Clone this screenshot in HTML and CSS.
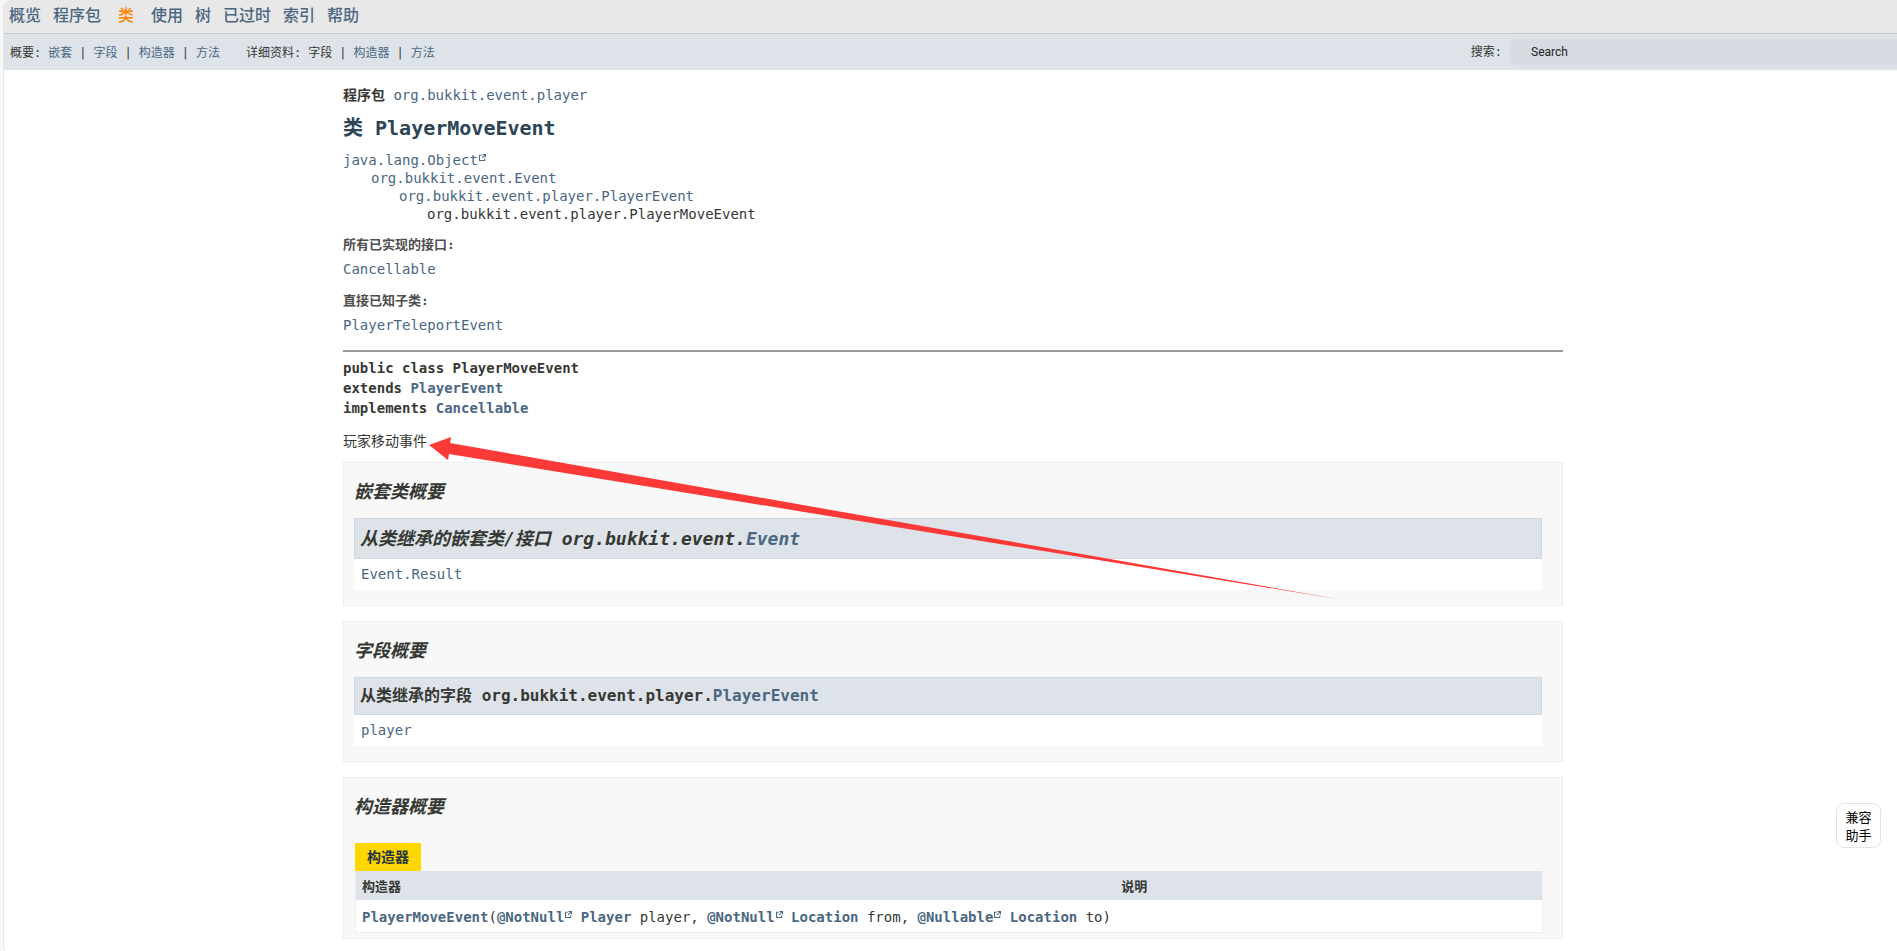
FILE: index.html
```html
<!DOCTYPE html>
<html lang="zh-CN">
<head>
<meta charset="utf-8">
<title>PlayerMoveEvent</title>
<link rel="stylesheet" href="styles.css">
</head>
<body>
<svg class="defs" aria-hidden="true">
  <symbol id="external" viewBox="0 0 8 8">
    <path d="M3 1.500H.6V7.400H6.500V5M4 .6H7.400V4M7.400 .6L3.500 4.500" fill="none" stroke="currentColor" stroke-width="1.200"/>
  </symbol>
</svg>
<div class="page">
  <header>
    <nav class="top-nav">
      <a href="#">概览</a>
      <a href="#">程序包</a>
      <span class="current">类</span>
      <a href="#">使用</a>
      <a href="#">树</a>
      <a href="#">已过时</a>
      <a href="#">索引</a>
      <a href="#">帮助</a>
    </nav>
    <div class="sub-nav">
      <div class="sub-list"><span>概要:</span><a href="#">嵌套</a><i>|</i><a href="#">字段</a><i>|</i><a href="#">构造器</a><i>|</i><a href="#">方法</a></div>
      <div class="sub-list"><span>详细资料:</span><span>字段</span><i>|</i><a href="#">构造器</a><i>|</i><a href="#">方法</a></div>
      <div class="search">
        <label for="search-input">搜索:</label>
        <input id="search-input" type="text" placeholder="Search">
      </div>
    </div>
  </header>

  <main>
    <div class="package"><b>程序包</b> <a href="#">org.bukkit.event.player</a></div>
    <h1>类 PlayerMoveEvent</h1>
    <div class="inheritance"><a href="#">java.lang.Object<svg class="ext"><use href="#external"/></svg></a>
      <div><a href="#">org.bukkit.event.Event</a>
        <div><a href="#">org.bukkit.event.player.PlayerEvent</a>
          <div>org.bukkit.event.player.PlayerMoveEvent</div>
        </div>
      </div>
    </div>
    <dl class="notes">
      <dt>所有已实现的接口:</dt>
      <dd><a href="#">Cancellable</a></dd>
      <dt>直接已知子类:</dt>
      <dd><a href="#">PlayerTeleportEvent</a></dd>
    </dl>
    <hr>
    <div class="signature">public class PlayerMoveEvent<br>extends <a href="#">PlayerEvent</a><br>implements <a href="#">Cancellable</a></div>
    <div class="description">玩家移动事件
      <svg class="arrow" viewBox="0 0 914 163" aria-hidden="true"><path d="M0 8L22 0L21 6L914 163L20 17L19 23Z"/></svg>
    </div>

    <section class="summary">
      <h2>嵌套类概要</h2>
      <div class="inherited">
        <h2 class="inherited-title">从类继承的嵌套类/接口 org.bukkit.event.<a href="#">Event</a></h2>
        <div class="members"><a href="#">Event.Result</a></div>
      </div>
    </section>

    <section class="summary">
      <h2>字段概要</h2>
      <div class="inherited">
        <h3 class="inherited-title">从类继承的字段 org.bukkit.event.player.<a href="#">PlayerEvent</a></h3>
        <div class="members"><a href="#">player</a></div>
      </div>
    </section>

    <section class="summary last">
      <h2>构造器概要</h2>
      <div class="caption">构造器</div>
      <table>
        <thead><tr><th>构造器</th><th>说明</th></tr></thead>
        <tbody><tr>
          <td><a href="#">PlayerMoveEvent</a>(<a href="#">@NotNull<svg class="ext"><use href="#external"/></svg></a> <a href="#">Player</a> player, <a href="#">@NotNull<svg class="ext"><use href="#external"/></svg></a> <a href="#">Location</a> from, <a href="#">@Nullable<svg class="ext"><use href="#external"/></svg></a> <a href="#">Location</a> to)</td>
          <td></td>
        </tr></tbody>
      </table>
    </section>
  </main>
</div>
<button class="helper" type="button">兼容助手</button>
</body>
</html>
```

FILE: styles.css
```css
* { box-sizing: border-box; }

body {
  margin: 0;
  background: #f7f7f7;
  color: #353833;
  font: 14px/18px "DejaVu Sans Mono", "Noto Sans CJK SC", monospace;
  overflow: hidden;
}

a { color: #4a6782; text-decoration: none; }

.defs { position: absolute; width: 0; height: 0; }

.page {
  min-height: 100vh;
  margin: 0 -5px 0 3px;
  background: #fff;
  border-left: 1px solid #e4e4e4;
  border-radius: 8px 0 0 8px;
  overflow: hidden;
}

.top-nav {
  display: flex;
  gap: 12px;
  height: 34px;
  padding: 4px 5px 0;
  background: #e8e8e8;
  border-bottom: 1px solid #c8cad0;
  font-size: 16px;
  line-height: 24px;
  font-weight: 500;
}

.current { padding: 0 5px; color: #ff8400; }

.sub-nav {
  display: flex;
  align-items: center;
  gap: 26px;
  height: 36px;
  padding-left: 6px;
  background: #dee3e9;
  font-size: 12px;
}

.sub-list { display: flex; gap: 7px; padding-top: 2px; }
.sub-list i { font-style: normal; }

.search {
  display: flex;
  align-items: center;
  gap: 8px;
  margin-left: auto;
}

.search input {
  width: 392px;
  height: 26px;
  padding: 0 21px;
  border: 0;
  border-radius: 6px;
  background: #d6dbe2;
  color: #222;
  font: 12px Roboto, sans-serif;
}
.search input::placeholder { color: #222; opacity: 1; }

main { max-width: 1220px; margin: 0 auto; padding-top: 16px; }

.package b { color: #353833; }

h1 {
  margin: 10px 0 9px;
  color: #2c4557;
  font-size: 20px;
  line-height: 28px;
}

.inheritance div { padding-left: 28px; }

.ext { width: 7px; height: 7px; margin-left: 1px; vertical-align: 4px; }

.notes { margin: 13px 0 0; }
.notes dt { font-size: 13px; font-weight: bold; color: #4e4e4e; line-height: 18px; }
.notes dd { margin: 6px 0 14px; }

hr { height: 2px; margin: 16px 0 6px; border: 0; background: #9b9b9b; }

.signature { font-weight: bold; line-height: 20px; }

.description { position: relative; margin: 14px 0 12px; }

.arrow {
  position: absolute;
  left: 86px;
  top: 5px;
  width: 914px;
  height: 163px;
  fill: #fb3a38;
}

.summary {
  margin-bottom: 15px;
  padding: 16px 20px 15px 10px;
  background: #f8f8f8;
  border: 1px solid #ededed;
}

.summary h2 {
  margin: 0 0 14px;
  font-size: 18px;
  line-height: 25px;
  font-style: italic;
}

.summary .inherited-title {
  margin: 0;
  padding: 7px 5px;
  background: #dee3e9;
  border: 1px solid #d0d9e0;
}

h3.inherited-title { font-size: 16px; line-height: 22px; }

.members { padding: 6px 7px 7px; background: #fff; }

.summary.last { padding: 16px 19px 5px 11px; }
.last h2 { margin: 0 0 24px -1px; }

.caption {
  width: fit-content;
  padding: 5px 12px;
  background: #ffd700;
  color: #253441;
  font-weight: bold;
}

table {
  width: 100%;
  border-collapse: collapse;
  background: #fff;
  border: 1px solid #eee;
  border-top: 0;
}

th {
  padding: 7px 6px 4px;
  background: #dee3e9;
  font-size: 13px;
  text-align: left;
}
th:first-child { width: 64%; }

td { padding: 8px 0 6px 6px; white-space: nowrap; }
td a { font-weight: bold; }

.helper {
  position: fixed;
  right: 16px;
  top: 803px;
  width: 45px;
  height: 45px;
  padding: 0 8px;
  border: 1px solid #e2e2e2;
  border-radius: 8px;
  background: #fff;
  color: #000;
  font: 13px/18px "Noto Sans CJK SC", sans-serif;
}
```
